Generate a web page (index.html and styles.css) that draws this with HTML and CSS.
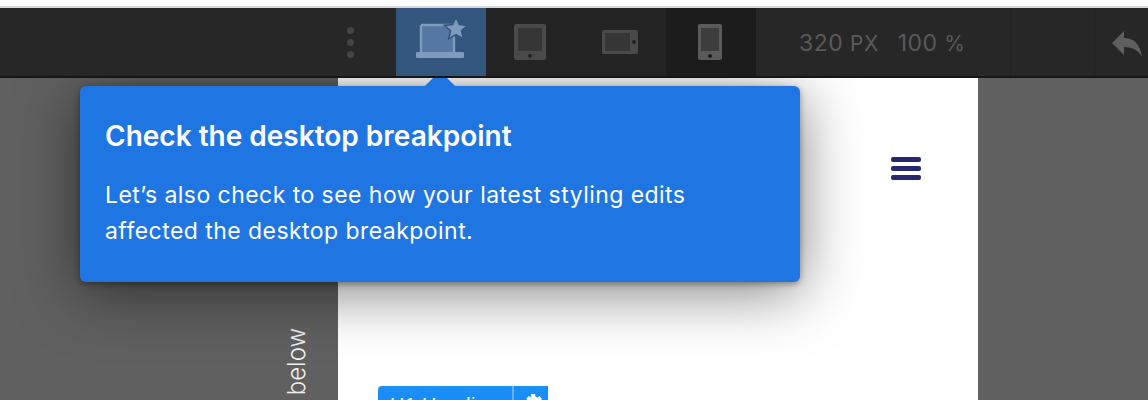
FILE: index.html
```html
<!DOCTYPE html>
<html lang="en">
<head>
  <meta charset="UTF-8" />
  <title>Check the desktop breakpoint</title>
  <link rel="stylesheet" href="styles.css">
</head>
<body>

  <div class="top-strip"></div>

  <!-- Breakpoint toolbar -->
  <div class="toolbar">
    <div class="handle-area">
      <div class="handle">
        <span class="dot"></span>
        <span class="dot"></span>
        <span class="dot"></span>
      </div>
    </div>

    <div class="device active">
      <svg width="54" height="44" viewBox="0 0 54 44">
        <path d="M5 32V5h33v27z" fill="#5577a2"/>
        <path d="M5 5h33M5 5v27M38 5v27" fill="none" stroke="#7e9abd" stroke-width="2.4"/>
        <rect x="0" y="32" width="48" height="6" rx="1" fill="#7e9abd"/>
        <path d="M40 -3l3.4 7.6 8.2.8-6.2 5.4 1.9 8-7.3-4.3-7.3 4.3 1.900-8-6.200-5.400 8.200-.8z" fill="#7e9abd" stroke="#33567f" stroke-width="1.500"/>
      </svg>
    </div>
    <div class="device">
      <svg width="32" height="36" viewBox="0 0 32 36">
        <rect x="0" y="0" width="32" height="36" rx="2" fill="#4a4a4a"/>
        <rect x="4" y="4" width="24" height="23" fill="#363636"/>
        <circle cx="16" cy="32" r="2" fill="#222"/>
      </svg>
    </div>
    <div class="device">
      <svg width="36" height="24" viewBox="0 0 36 24">
        <rect x="0" y="0" width="36" height="24" rx="2" fill="#4a4a4a"/>
        <rect x="3" y="3" width="25" height="18" fill="#363636"/>
        <circle cx="32" cy="12" r="2" fill="#222"/>
      </svg>
    </div>
    <div class="device current">
      <svg width="24" height="36" viewBox="0 0 24 36">
        <rect x="0" y="0" width="24" height="36" rx="2" fill="#5a5a5a"/>
        <rect x="3" y="4" width="18" height="23" fill="#3d3d3d"/>
        <circle cx="12" cy="32" r="2" fill="#1c1c1c"/>
      </svg>
    </div>

    <div class="readout">
      <span>320 <em>PX</em></span>
      <span>100 <em>%</em></span>
    </div>
    <div class="toolbar-gap"></div>
    <div class="undo">
      <svg width="30" height="26" viewBox="0 0 30 26">
        <path d="M0 12L12 0v7c10 0 16 6 18 19-3-6-9-10-18-10v8z" fill="#5f5f5f"/>
      </svg>
    </div>
  </div>

  <div class="stage">
    <div class="gutter">
      <span class="ruler-label">below</span>
    </div>

    <div class="page">
      <div class="page-head">
        <div class="burger">
          <span></span>
          <span></span>
          <span></span>
        </div>
      </div>
      <div class="element-tag">
        <span class="tag-name">H1 Heading</span>
        <span class="tag-gear">
          <svg width="18" height="18" viewBox="0 0 18 18">
            <path d="M7 0h4l.5 2.600 1.800.8L15.500 2l2.500 3-1.700 2 .3 2 1.900 1-1.500 4-2.500-.5-1.300 1.400.5 2.600H6.500l.5-2.600-1.300-1.400-2.500.5L1.700 10l1.900-1 .3-2L2.200 5 4.700 2l2.200 1.400z" fill="#fff"/>
          </svg>
        </span>
      </div>
    </div>

    <div class="gutter-right"></div>

    <!-- Tour popover -->
    <div class="popover">
      <h2>Check the desktop breakpoint</h2>
      <p>Let’s also check to see how your latest styling edits affected the desktop breakpoint.</p>
    </div>
  </div>

</body>
</html>
```

FILE: styles.css
```css
html, body {
  height: 400px;
}

body {
  margin: 0;
  font-family: 'Inter', 'Liberation Sans', sans-serif;
  background-color: #fff;
  overflow: hidden;
}

.top-strip {
  height: 6px;
  background: #fff;
  border-bottom: 2px solid #d9d9dd;
}

/* Toolbar */
.toolbar {
  display: flex;
  height: 68px;
  background-color: #272727;
  border-bottom: 2px solid #161616;
}

.handle-area {
  width: 396px;
  display: flex;
  justify-content: flex-end;
  align-items: center;
  padding-right: 42px;
  box-sizing: border-box;
}

.handle {
  display: flex;
  flex-direction: column;
  gap: 5px;
}

.dot {
  width: 7px;
  height: 7px;
  border-radius: 50%;
  background-color: #444;
}

.device {
  width: 90px;
  display: flex;
  align-items: center;
  justify-content: center;
  padding-right: 2px;
  background-color: #232323;
  box-sizing: border-box;
}

.device.active {
  background-color: #33567f;
  padding: 0 0 0 4px;
}

.device.current {
  background-color: #1c1c1c;
}

.readout {
  width: 255px;
  display: flex;
  align-items: center;
  gap: 19px;
  padding: 2px 0 0 43px;
  box-sizing: border-box;
  font-size: 23px;
  letter-spacing: 0.45px;
  color: #5a5a5a;
  border-right: 1px solid #222;
}

.readout em {
  font-style: normal;
  font-size: 21px;
}

.toolbar-gap {
  width: 83px;
  border-right: 1px solid #222;
}

.undo {
  flex: 1;
  display: flex;
  align-items: center;
  padding: 4px 0 0 17px;
}

/* Canvas */
.stage {
  position: relative;
  display: flex;
  height: 322px;
  overflow: hidden;
  background-color: #606060;
}

.gutter {
  width: 338px;
  display: flex;
  justify-content: flex-end;
  align-items: flex-end;
  padding: 0 29px 5px 0;
  box-sizing: border-box;
}

.ruler-label {
  writing-mode: vertical-rl;
  transform: rotate(180deg);
  font-size: 24px;
  font-weight: 300;
  line-height: 24px;
  color: #f0f0f0;
}

.page {
  width: 640px;
  background-color: #fff;
}

.page-head {
  height: 308px;
  display: flex;
  justify-content: flex-end;
  padding-right: 57px;
  box-sizing: border-box;
}

.burger {
  display: flex;
  flex-direction: column;
  gap: 4px;
  margin-top: 79px;
}

.burger span {
  width: 30px;
  height: 5px;
  border-radius: 2px;
  background-color: #27296f;
}

.element-tag {
  display: flex;
  width: 170px;
  height: 30px;
  margin-left: 40px;
  border-radius: 4px 0 0 0;
  background-color: #1b8ef5;
  color: #fff;
}

.tag-name {
  width: 136px;
  padding: 7px 0 0 12px;
  box-sizing: border-box;
  font-size: 20px;
  line-height: 24px;
  letter-spacing: 0.3px;
  white-space: nowrap;
  font-family: 'Liberation Sans', sans-serif;
  border-right: 2px solid #66b0f8;
}

.tag-gear {
  padding: 8px 0 0 10px;
}

.gutter-right {
  flex: 1;
}

.popover {
  position: absolute;
  left: 80px;
  top: 8px;
  width: 720px;
  height: 196px;
  padding: 35px 90px 0 25px;
  box-sizing: border-box;
  border-radius: 6px;
  background-color: #1f76e2;
  color: #fff;
  box-shadow: 0 2px 6px rgba(0, 0, 0, 0.35), 0 10px 60px rgba(0, 0, 0, 0.5);
}

.popover::before {
  content: '';
  position: absolute;
  left: 345px;
  top: -15px;
  border-left: 15px solid transparent;
  border-right: 15px solid transparent;
  border-bottom: 15px solid #1f76e2;
}

.popover h2 {
  margin: 0 0 26px;
  font-size: 28px;
  line-height: 30px;
  font-weight: 600;
}

.popover p {
  margin: 0;
  font-size: 23px;
  line-height: 36px;
  letter-spacing: 0.45px;
}
```
